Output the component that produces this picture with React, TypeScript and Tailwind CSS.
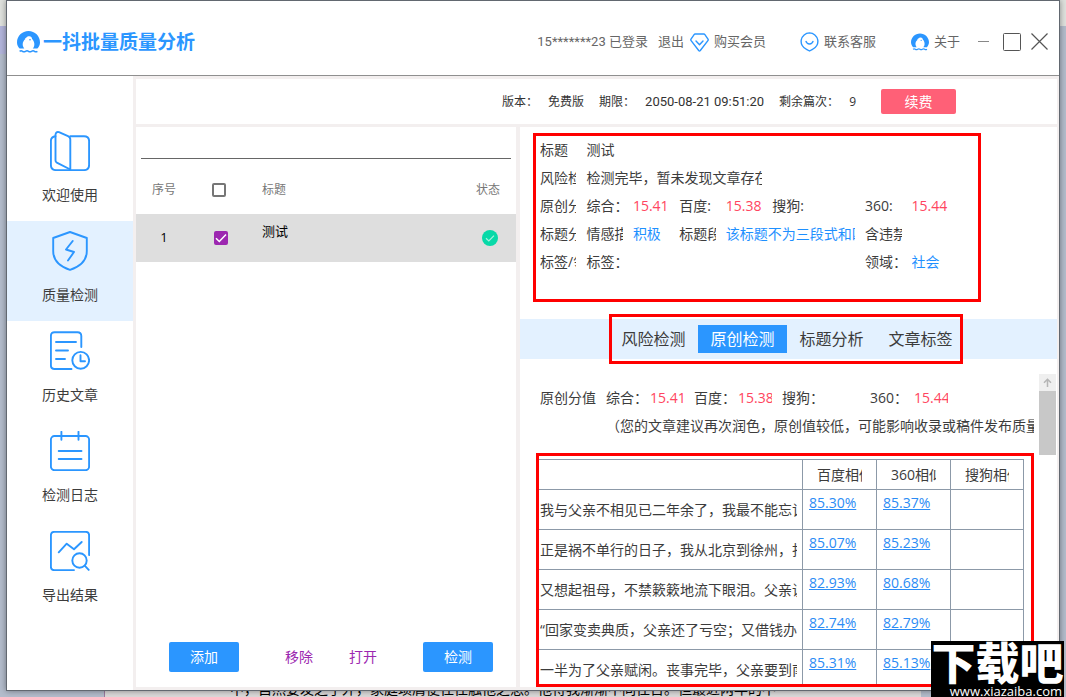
import React, { useState } from "react";

type IconProps = { className?: string };

function PenguinLogo({ className }: IconProps) {
  return (
    <svg viewBox="0 0 23 22" className={className} fill="none" aria-hidden="true">
      <path
        d="M2.600 17.600C1 15.800 0 13.800 0 11.400 0 5.100 5.100 0 11.500 0S23 5.100 23 11.400c0 2.400-1 4.400-2.600 6.200h-4.600c1.200-1.300 1.700-3 1.500-5-.1-1.700-.9-3.500-2.200-4.700-.2-1.500-1.200-2.500-2.600-2.600-1.300-.1-2.400.4-3.100 1.300L8 7.400l.4.700C6.700 9.500 5.700 11.300 5.700 13.300c0 1.700.6 3.100 1.600 4.300z"
        fill="#2b96ff"
      />
      <circle cx="13" cy="8.800" r="0.800" fill="#2b96ff" />
      <path
        d="M2.600 20.300q1.500-1.100 2.900 0t3 0 3 0 3 0 3 0 2.900 0"
        stroke="#2b96ff"
        strokeWidth="1.500"
      />
    </svg>
  );
}

function DiamondIcon({ className }: IconProps) {
  return (
    <svg viewBox="0 0 19 19" className={className} fill="none" stroke="#2b96ff" strokeWidth="1.400" strokeLinejoin="round" strokeLinecap="round" aria-hidden="true">
      <path d="M5.200 1h8.600q.7 0 1.100.6l3.100 4.500q.5.8-.1 1.500L10.300 17.500q-.8.9-1.600 0L1.100 7.600q-.6-.7-.1-1.500l3.100-4.500q.4-.6 1.100-.6z" />
      <path d="M6 8l3.500 3.800L13 8" />
    </svg>
  );
}

function ServiceIcon({ className }: IconProps) {
  return (
    <svg viewBox="0 0 19 20" className={className} fill="none" stroke="#2b96ff" strokeWidth="1.400" strokeLinejoin="round" strokeLinecap="round" aria-hidden="true">
      <path d="M9.500.9a8.500 8.500 0 0 1 3 16.400L9.500 19l-3-1.700A8.500 8.500 0 0 1 9.500.9z" />
      <path d="M6 9.500l.8 1.200q2.700 2.600 5.400 0L13 9.500" />
    </svg>
  );
}

const navIcons: Record<string, React.ReactNode> = {
  welcome: (
    <>
      <path d="M5.500 5.200C2.500 5.600.9 7.200.9 10v24q0 5.100 5.100 5.100h28q5.100 0 5.100-5.100V10q0-4.800-5.100-4.800H20.300" />
      <path d="M9 1.200l9 3.900q2.300 1 2.300 3.400v30L6.800 31.700q-1.300-.6-1.300-2.400V3.700Q6 .3 9 1.200z" />
    </>
  ),
  quality: (
    <>
      <path d="M20 1l16.800 6v13c0 9-6.800 15.600-16.800 18.900C10 35.600 3.200 29 3.200 20V7z" />
      <path d="M22.700 10L16 18.500l8 2.500-6 8.500" />
    </>
  ),
  history: (
    <>
      <path d="M31.300 16V5q0-3.800-3.800-3.800h-23Q.9 1.200.9 5v29.300q0 3.700 3.600 3.700h17" />
      <path d="M6 11h20M6 19.500h12M6 28h9" />
      <circle cx="30.700" cy="29.300" r="8.400" />
      <path d="M30.500 24.300v6H35" />
    </>
  ),
  log: (
    <>
      <rect x="0.900" y="5" width="38.200" height="34.200" rx="3.600" />
      <path d="M11.400.8v8M28.500.8v8M8.700 20h22.800M8.700 28h22.800" />
    </>
  ),
  exportResult: (
    <>
      <path d="M39.100 24V4.500q0-3.600-3.600-3.600h-31Q.9.900.9 4.500v31q0 3.600 3.600 3.600H24" />
      <path d="M8.700 21.300l8-8.600 7.300 5.600 7.700-7.300" />
      <circle cx="29.500" cy="29.500" r="7.200" />
      <path d="M34.700 34.700l4 4.200" />
    </>
  ),
};

const navItems = [
  { id: "welcome", label: "欢迎使用" },
  { id: "quality", label: "质量检测" },
  { id: "history", label: "历史文章" },
  { id: "log", label: "检测日志" },
  { id: "exportResult", label: "导出结果" },
];

const tabs = ["风险检测", "原创检测", "标题分析", "文章标签"];

const sentences = [
  { text: "我与父亲不相见已二年余了，我最不能忘记", baidu: "85.30%", so: "85.37%" },
  { text: "正是祸不单行的日子，我从北京到徐州，打", baidu: "85.07%", so: "85.23%" },
  { text: "又想起祖母，不禁簌簌地流下眼泪。父亲说", baidu: "82.93%", so: "80.68%" },
  { text: "“回家变卖典质，父亲还了亏空；又借钱办了", baidu: "82.74%", so: "82.79%" },
  { text: "一半为了父亲赋闲。丧事完毕，父亲要到南", baidu: "85.31%", so: "85.13%" },
];

function Check({ className }: IconProps) {
  return (
    <svg viewBox="0 0 14 14" className={className} fill="none" stroke="white" strokeWidth="1.500" aria-hidden="true">
      <path d="M2 7.200l3.300 3.300L12 3.600" />
    </svg>
  );
}

function Header() {
  return (
    <header className="flex h-[75px] shrink-0 items-center justify-between border-b border-[#8f8f8f] pt-2 pr-[11px] pl-2.5 text-[13px] text-[#666]">
      <h1 className="flex items-center gap-[3px] text-[19px] font-bold text-[#2b96ff]">
        <PenguinLogo className="h-[22px] w-[23px]" />
        一抖批量质量分析
      </h1>
      <div className="flex items-center whitespace-nowrap">
        <span className="font-[Roboto,'Noto_Sans_CJK_SC',sans-serif]">15*******23 已登录</span>
        <button type="button" className="ml-2.5">退出</button>
        <button type="button" className="ml-1.5 flex items-center gap-[5px]">
          <DiamondIcon className="h-[19px] w-[19px]" />
          购买会员
        </button>
        <button type="button" className="ml-[34px] flex items-center gap-[5px]">
          <ServiceIcon className="h-5 w-[19px]" />
          联系客服
        </button>
        <button type="button" className="ml-[35px] flex items-center gap-[5px]">
          <PenguinLogo className="h-[18px] w-[18px]" />
          关于
        </button>
        <button type="button" aria-label="最小化" className="ml-[18px]">
          <svg viewBox="0 0 12 18" className="h-[18px] w-3" stroke="#888" aria-hidden="true">
            <path d="M0 8.500h11" />
          </svg>
        </button>
        <button type="button" aria-label="最大化" className="ml-[13px]">
          <svg viewBox="0 0 18 19" className="h-[19px] w-[18px]" fill="none" stroke="#555" aria-hidden="true">
            <rect x="0.500" y="0.500" width="17" height="17" rx="1" />
          </svg>
        </button>
        <button type="button" aria-label="关闭" className="ml-2.5">
          <svg viewBox="0 0 17 18" className="h-[18px] w-[17px]" stroke="#555" strokeWidth="1.200" aria-hidden="true">
            <path d="M.5.500l16 16M16.500.5l-16 16" />
          </svg>
        </button>
      </div>
    </header>
  );
}

function Sidebar() {
  return (
    <nav className="w-[126px] shrink-0 bg-white pt-[45px]">
      {navItems.map((item) => (
        <a
          key={item.id}
          href={"#" + item.id}
          className={
            item.id === "quality"
              ? "flex h-[100px] flex-col items-center gap-3.5 bg-[#e3f1ff] pt-2.5 text-sm text-[#3c3c3c]"
              : "flex h-[100px] flex-col items-center gap-3.5 pt-2.5 text-sm text-[#3c3c3c]"
          }
        >
          <svg viewBox="0 0 40 40" className="h-10 w-10" fill="none" stroke="#2b96ff" strokeWidth="1.900" strokeLinecap="round" strokeLinejoin="round" aria-hidden="true">
            {navIcons[item.id]}
          </svg>
          {item.label}
        </a>
      ))}
    </nav>
  );
}

function InfoBar() {
  return (
    <div className="flex h-[45px] shrink-0 items-center justify-end bg-white pr-[101px] text-xs whitespace-nowrap text-[#333]">
      <span>版本：</span>
      <span className="ml-2.5">免费版</span>
      <span className="ml-[15px]">期限：</span>
      <span className="ml-2.5 font-[Roboto,sans-serif] text-[13px]">2050-08-21 09:51:20</span>
      <span className="ml-[15px]">剩余篇次：</span>
      <span className="ml-2.5">9</span>
      <button type="button" className="ml-[25px] h-[25px] w-[75px] rounded-xs bg-[#ff6077] text-sm text-white">
        续费
      </button>
    </div>
  );
}

function ArticleList() {
  const [all, setAll] = useState(false);
  const [picked, setPicked] = useState(true);
  return (
    <section className="flex w-[380px] shrink-0 flex-col bg-white">
      <input
        aria-label="搜索标题"
        className="mx-[5px] h-8 border-b border-[#666] bg-transparent text-sm outline-none"
      />
      <table className="mt-1.5 w-full table-fixed border-collapse text-left">
        <colgroup>
          <col className="w-14" />
          <col className="w-[70px]" />
          <col />
          <col className="w-14" />
        </colgroup>
        <thead>
          <tr className="h-[49px] text-xs text-[#777]">
            <th className="text-center font-normal">序号</th>
            <th className="pl-5">
              <input
                type="checkbox"
                aria-label="全选"
                checked={all}
                onChange={() => setAll(!all)}
                className="block h-3.5 w-3.5 appearance-none rounded-xs border-2 border-[#767676] bg-white checked:bg-[#9c27b0]"
              />
            </th>
            <th className="font-normal">标题</th>
            <th className="text-center font-normal">状态</th>
          </tr>
        </thead>
        <tbody>
          <tr className="h-12 bg-[#dedede] text-[13px] text-black">
            <td className="text-center">1</td>
            <td className="pl-[22px]">
              <label className="relative block h-3.5 w-3.5">
                <input
                  type="checkbox"
                  aria-label="选择 测试"
                  checked={picked}
                  onChange={() => setPicked(!picked)}
                  className="block h-3.5 w-3.5 appearance-none rounded-xs border-2 border-[#767676] checked:border-[#9c27b0] checked:bg-[#9c27b0]"
                />
                {picked && <Check className="pointer-events-none absolute inset-0" />}
              </label>
            </td>
            <td className="pt-2 align-top">测试</td>
            <td>
              <svg viewBox="0 0 16 16" className="ml-[22px] h-4 w-4" fill="none" role="img" aria-label="完成">
                <circle cx="8" cy="8" r="8" fill="#08d9a8" />
                <path d="M4 8.300l2.800 2.700 5.200-5.300" stroke="#a8f3df" strokeWidth="1.200" />
              </svg>
            </td>
          </tr>
        </tbody>
      </table>
      <div className="mt-auto mb-[15px] flex h-[30px] items-center pl-[33px] text-sm">
        <button type="button" className="h-[30px] w-[70px] rounded-xs bg-[#2b96ff] text-white">添加</button>
        <button type="button" className="ml-[46px] text-[#9c27b0]">移除</button>
        <button type="button" className="ml-9 text-[#9c27b0]">打开</button>
        <button type="button" className="ml-[46px] h-[30px] w-[70px] rounded-xs bg-[#2b96ff] text-white">检测</button>
      </div>
    </section>
  );
}

function Cell({ children, className = "" }: { children?: React.ReactNode; className?: string }) {
  return (
    <div className={"pr-2.5 " + className}>
      <div className="overflow-hidden">{children}</div>
    </div>
  );
}

function Summary() {
  return (
    <section className="mt-1.5 ml-[13px] h-[169px] w-[448px] shrink-0 border-3 border-[#f00] pl-1">
      <div className="grid w-[418px] auto-rows-[28px] grid-cols-9 text-sm leading-[27px] whitespace-nowrap text-[#3c3c3c]">
        <Cell>标题</Cell>
        <Cell className="col-span-8">测试</Cell>

        <Cell>风险检</Cell>
        <Cell className="col-span-4">检测完毕，暂未发现文章存在</Cell>
        <div className="col-span-4" />

        <Cell>原创分</Cell>
        <Cell>综合：</Cell>
        <Cell className="text-[#ff4560]">15.41</Cell>
        <Cell>百度:</Cell>
        <Cell className="text-[#ff4560]">15.38</Cell>
        <Cell className="col-span-2">搜狗:</Cell>
        <Cell>360:</Cell>
        <Cell className="text-[#ff4560]">15.44</Cell>

        <Cell>标题分</Cell>
        <Cell>情感描</Cell>
        <Cell className="text-[#1e90ff]">积极</Cell>
        <Cell>标题段</Cell>
        <Cell className="col-span-3 text-[#1e90ff]">该标题不为三段式和四</Cell>
        <Cell>含违禁</Cell>
        <div />

        <Cell>标签/领</Cell>
        <Cell className="col-span-6">标签：</Cell>
        <Cell>领域：</Cell>
        <Cell className="text-[#1e90ff]">社会</Cell>
      </div>
    </section>
  );
}

function Tabs() {
  const [active, setActive] = useState("原创检测");
  return (
    <div className="mt-[17px] flex h-10 shrink-0 justify-center bg-[#e3f1ff] pr-[3px]">
      <div role="tablist" className="relative flex items-center">
        {tabs.map((tab) => (
          <button
            key={tab}
            type="button"
            role="tab"
            aria-selected={tab === active}
            onClick={() => setActive(tab)}
            className={
              tab === active
                ? "h-7 w-[89px] bg-[#2b96ff] text-base leading-7 text-white"
                : "h-7 w-[89px] text-base leading-7 text-[#3c3c3c]"
            }
          >
            {tab}
          </button>
        ))}
        <div className="pointer-events-none absolute -inset-y-[5px] right-0.5 left-0 border-3 border-[#f00]" />
      </div>
    </div>
  );
}

function OriginalityReport() {
  return (
    <section className="mt-[15px] flex min-h-0 flex-1">
      <div className="flex min-w-0 flex-1 flex-col overflow-hidden pt-2.5 pr-[5px] text-sm whitespace-nowrap text-[#3c3c3c]">
        <div className="grid shrink-0 grid-cols-[66px_repeat(8,44px)] pl-5 leading-7">
          <Cell>原创分值</Cell>
          <Cell>综合：</Cell>
          <Cell className="text-[#ff4560]">15.41</Cell>
          <Cell>百度：</Cell>
          <Cell className="text-[#ff4560]">15.38</Cell>
          <Cell className="col-span-2">搜狗：</Cell>
          <Cell>360：</Cell>
          <Cell className="text-[#ff4560]">15.44</Cell>
        </div>
        <p className="ml-[86px] h-7 shrink-0 overflow-hidden leading-7">
          （您的文章建议再次润色，原创值较低，可能影响收录或稿件发布质量
        </p>
        <div className="relative mt-[13px] ml-4 min-h-0 flex-1 overflow-hidden pt-1.5">
          <table className="ml-0.5 w-[486px] table-fixed border-collapse text-left leading-[18px]">
            <colgroup>
              <col />
              <col className="w-[74px]" />
              <col className="w-[74px]" />
              <col className="w-[73px]" />
            </colgroup>
            <thead>
              <tr className="h-[30px]">
                <th aria-label="句子" className="border border-[#8c99a8]" />
                {["百度相似", "360相似", "搜狗相似"].map((name) => (
                  <th key={name} className="border border-[#8c99a8] px-3.5 font-normal">
                    <div className="overflow-hidden">{name}</div>
                  </th>
                ))}
              </tr>
            </thead>
            <tbody>
              {sentences.map((s) => (
                <tr key={s.text} className="h-10">
                  <td className="border border-[#8c99a8] pr-[5px] pl-px">
                    <div className="overflow-hidden">{s.text}</div>
                  </td>
                  <td className="border border-[#8c99a8] pt-1 pl-1.5 align-top">
                    <a href="#baidu" className="text-[#2b8cf5] underline">{s.baidu}</a>
                  </td>
                  <td className="border border-[#8c99a8] pt-1 pl-1.5 align-top">
                    <a href="#so" className="text-[#2b8cf5] underline">{s.so}</a>
                  </td>
                  <td className="border border-[#8c99a8]" />
                </tr>
              ))}
            </tbody>
          </table>
          <div className="pointer-events-none absolute inset-0 border-3 border-[#f00]" />
        </div>
      </div>
      <div className="mr-px w-[17px] shrink-0" aria-hidden="true">
        <div className="flex h-[17px] items-center justify-center bg-[#efefef]">
          <svg viewBox="0 0 9 9" className="h-[9px] w-[9px]" fill="none" stroke="#b5b5b5" strokeWidth="1.500">
            <path d="M4.500 9V1.200M1 4.700l3.500-3.500L8 4.700" />
          </svg>
        </div>
        <div className="h-16 bg-[#c8c8c8]" />
      </div>
    </section>
  );
}

export default function App() {
  return (
    <div
      className="relative h-screen overflow-hidden bg-[#b3bccb] px-1.5 pb-1.5"
      style={{ fontFamily: '"Open Sans", "Noto Sans CJK SC", sans-serif' }}
    >
      <div className="absolute inset-x-0 top-0 h-[26px] bg-[#dfe1dd]" />
      <div className="absolute top-[26px] left-0 h-7 w-1.5 bg-[#b2b4da]" />
      <div className="absolute right-[145px] bottom-0 left-[104px] h-4 overflow-hidden border-l border-[#9a7a9e] bg-[#dad8d8] pl-[125px] text-sm leading-4 whitespace-nowrap text-black">
        中，自然要发之于外，家庭琐屑便往往触他之怒。他待我渐渐不同往日。但最近两年的不
      </div>

      <div className="relative flex h-full flex-col border border-[#626870] bg-white shadow-[0_0_6px_rgba(0,0,0,0.4)]">
        <Header />
        <div className="flex min-h-0 flex-1">
          <Sidebar />
          <main className="flex min-w-0 flex-1 flex-col gap-[3px] bg-[#f3efef] pt-[3px] pr-0.5 pb-[3px] pl-[3px]">
            <InfoBar />
            <div className="flex min-h-0 flex-1 gap-1">
              <ArticleList />
              <div className="flex min-w-0 flex-1 flex-col bg-white">
                <Summary />
                <Tabs />
                <OriginalityReport />
              </div>
            </div>
          </main>
        </div>
      </div>

      <aside className="absolute right-0.5 bottom-0 h-14 w-[133px] overflow-hidden bg-black text-white">
        <div className="text-center text-[44px] leading-[44px] font-black whitespace-nowrap">下载吧</div>
        <div className="pr-0.5 text-right text-[13px] leading-3">www.xiazaiba.com</div>
      </aside>
    </div>
  );
}
